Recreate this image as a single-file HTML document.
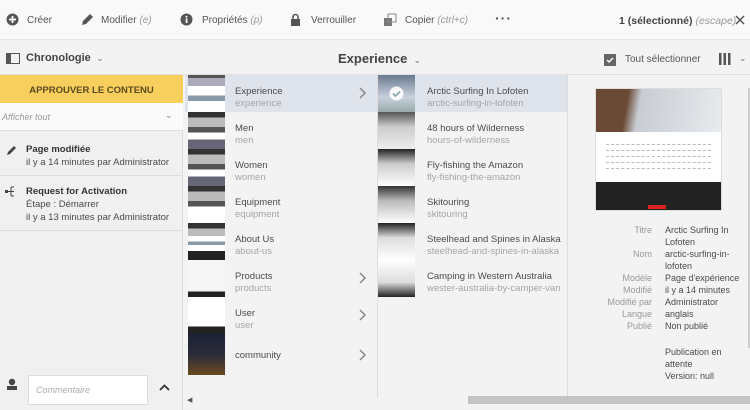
<!DOCTYPE html>
<html><head><meta charset="utf-8"><style>
*{margin:0;padding:0;box-sizing:border-box}
body{width:750px;height:410px;overflow:hidden;background:#f3f3f3;font-family:"Liberation Sans",sans-serif;color:#4b4b4b;position:relative;font-size:10px}
.a{position:absolute}
.tb{left:0;top:0;width:750px;height:40px;background:#f9f9f9;border-bottom:1px solid #e6e6e6}
.tb span{position:absolute;top:15px;font-size:10px;color:#555}
.tb i{color:#999}
.bar2{left:0;top:41px;width:750px;height:34px;background:#f3f3f3;border-bottom:1px solid #e0e0e0}
.left{left:0;top:75px;width:183px;height:335px;background:#f0f0f0;border-right:1px solid #ddd}
.col{top:75px;height:323px;background:#f3f3f3}
.row{position:absolute;left:0;height:37px;width:100%}
.row .t{position:absolute;font-size:9.5px;color:#4b4b4b;top:11px}
.row .s{position:absolute;font-size:9.5px;color:#a5a5a5;top:23px}
.th{position:absolute;left:3px;top:0;width:37px;height:37px}
.chev{position:absolute;right:10px;top:11px;width:8px;height:14px}
.mt{font-size:9px;color:#999;text-align:right;width:82px;position:absolute;left:570px}
.mv{font-size:9px;color:#4b4b4b;position:absolute;left:665px;width:80px;line-height:12px}
</style></head><body>
<div class="a tb">
<svg class="a" style="left:6px;top:13px" width="13" height="13"><circle cx="6.5" cy="6.5" r="6" fill="#555"/><path d="M6.5 3v7M3 6.5h7" stroke="#fff" stroke-width="1.8"/></svg>
<span style="left:27px">Créer</span>
<svg class="a" style="left:80px;top:13px" width="14" height="14"><path d="M2 12l1-4 7-7 3 3-7 7z" fill="#555"/></svg>
<span style="left:101px">Modifier <i>(e)</i></span>
<svg class="a" style="left:180px;top:13px" width="13" height="13"><circle cx="6.5" cy="6.5" r="6" fill="#555"/><rect x="5.7" y="5.5" width="1.7" height="4.5" fill="#fff"/><circle cx="6.5" cy="3.7" r="1" fill="#fff"/></svg>
<span style="left:202px">Propriétés <i>(p)</i></span>
<svg class="a" style="left:290px;top:13px" width="11" height="13"><path d="M3 6V4a2.5 2.5 0 015 0v2" stroke="#555" stroke-width="1.6" fill="none"/><rect x="1" y="6" width="9" height="7" fill="#555"/></svg>
<span style="left:311px">Verrouiller</span>
<svg class="a" style="left:384px;top:13px" width="13" height="13"><rect x="0" y="5" width="8" height="8" fill="#777"/><rect x="4" y="1" width="8" height="8" fill="none" stroke="#888"/></svg>
<span style="left:405px">Copier <i>(ctrl+c)</i></span>
<span style="left:495px;top:10px;font-weight:bold;font-size:14px;letter-spacing:1px">···</span>
<span style="left:619px;font-size:10.5px;color:#444;font-weight:bold">1 (sélectionné) <i style="font-weight:normal">(escape)</i></span>
<svg class="a" style="left:735px;top:15px" width="10" height="10"><path d="M1 1l8 8M9 1l-8 8" stroke="#555" stroke-width="1.5"/></svg>
</div>
<div class="a bar2">
<svg class="a" style="left:6px;top:12px" width="14" height="11"><rect x="0.5" y="0.5" width="13" height="10" fill="none" stroke="#555"/><rect x="1" y="1" width="4" height="9" fill="#555"/></svg>
<span class="a" style="left:26px;top:11px;font-weight:bold;font-size:11px;color:#444">Chronologie <span style="font-weight:normal;font-size:9px;color:#777">&nbsp;⌄</span></span>
<span class="a" style="left:338px;top:10px;font-weight:bold;font-size:13px;color:#444">Experience <span style="font-weight:normal;font-size:9px;color:#777">&nbsp;⌄</span></span>
<svg class="a" style="left:604px;top:13px" width="12" height="12"><rect x="0" y="0" width="12" height="12" fill="#666"/><path d="M3 6l2 2 4-4" stroke="#fff" stroke-width="1.5" fill="none"/></svg>
<span class="a" style="left:625px;top:13px;font-size:10px;color:#555">Tout sélectionner</span>
<svg class="a" style="left:719px;top:12px" width="12" height="12"><rect x="0" y="0" width="2.5" height="12" fill="#555"/><rect x="4.5" y="0" width="2.5" height="12" fill="#555"/><rect x="9" y="0" width="2.5" height="12" fill="#555"/></svg>
<span class="a" style="left:739px;top:12px;font-size:9px;color:#777">⌄</span>
</div>
<div class="a left">
<div class="a" style="left:0;top:0;width:183px;height:28px;background:#f8cf5d;text-align:center;font-weight:bold;font-size:9.5px;color:#5a4a20;padding-top:10px">APPROUVER LE CONTENU</div>
<div class="a" style="left:0;top:28px;width:183px;height:28px;background:#fafafa;border-bottom:1px solid #ddd"><span class="a" style="left:2px;top:9px;font-style:italic;color:#999;font-size:9px">Afficher tout</span><span class="a" style="left:165px;top:7px;color:#888;font-size:9px">⌄</span></div>
<svg class="a" style="left:6px;top:69px" width="12" height="12"><path d="M1 11l1-3 6-6 2 2-6 6z" fill="#444"/></svg>
<span class="a" style="left:26px;top:69px;font-weight:bold;font-size:9.5px;color:#333">Page modifiée</span>
<span class="a" style="left:26px;top:82px;font-size:9.5px">il y a 14 minutes par Administrator</span>
<div class="a" style="left:0;top:100px;width:183px;border-top:1px solid #ddd"></div>
<svg class="a" style="left:5px;top:111px" width="14" height="12"><rect x="0" y="4" width="3" height="3" fill="#444"/><path d="M3 5.5h3M6 1v9M6 1h3M6 5.5h3M6 10h3" stroke="#444" fill="none"/></svg>
<span class="a" style="left:26px;top:111px;font-weight:bold;font-size:9.5px;color:#333">Request for Activation</span>
<span class="a" style="left:26px;top:124px;font-size:9.5px">Étape : Démarrer</span>
<span class="a" style="left:26px;top:137px;font-size:9.5px">il y a 13 minutes par Administrator</span>
<div class="a" style="left:0;top:155px;width:183px;border-top:1px solid #ddd"></div>
<svg class="a" style="left:6px;top:303px" width="12" height="13"><circle cx="6" cy="4" r="3.2" fill="#444"/><rect x="1" y="8" width="10" height="4" fill="#444"/></svg>
<div class="a" style="left:28px;top:300px;width:120px;height:30px;background:#fff;border:1px solid #ddd"><span class="a" style="left:7px;top:9px;font-style:italic;color:#aaa;font-size:9px">Commentaire</span></div>
<svg class="a" style="left:159px;top:309px" width="11" height="7"><path d="M1 6l4.5-4.5L10 6" stroke="#333" stroke-width="1.8" fill="none"/></svg>
</div>
<div class="a col" style="left:185px;width:192px">
<div class="row" style="top:0;background:#dfe4ec"><div class="th" style="background:linear-gradient(#555 0 8%,#aab 8% 30%,#fff 30% 55%,#8899aa 55% 70%,#fff 70%)"></div><span class="t" style="left:50px">Experience</span><span class="s" style="left:50px">experience</span><svg class="chev"><path d="M1 2l5 5-5 5" stroke="#888" stroke-width="1.5" fill="none"/></svg></div>
<div class="row" style="top:37px"><div class="th" style="background:linear-gradient(#333 0 15%,#bbb 15% 40%,#555 40% 55%,#fff 55% 75%,#667 75%)"></div><span class="t" style="left:50px">Men</span><span class="s" style="left:50px">men</span></div>
<div class="row" style="top:74px"><div class="th" style="background:linear-gradient(#333 0 15%,#bbb 15% 40%,#555 40% 55%,#fff 55% 75%,#667 75%)"></div><span class="t" style="left:50px">Women</span><span class="s" style="left:50px">women</span></div>
<div class="row" style="top:111px"><div class="th" style="background:linear-gradient(#333 0 15%,#bbb 15% 40%,#555 40% 55%,#fff 55%)"></div><span class="t" style="left:50px">Equipment</span><span class="s" style="left:50px">equipment</span></div>
<div class="row" style="top:148px"><div class="th" style="background:linear-gradient(#333 0 15%,#bbb 15% 35%,#fff 35% 50%,#8899aa 50% 60%,#fff 60% 75%,#222 75%)"></div><span class="t" style="left:50px">About Us</span><span class="s" style="left:50px">about-us</span></div>
<div class="row" style="top:185px"><div class="th" style="background:linear-gradient(#f6f6f6 0 85%,#222 85%)"></div><span class="t" style="left:50px">Products</span><span class="s" style="left:50px">products</span><svg class="chev"><path d="M1 2l5 5-5 5" stroke="#888" stroke-width="1.5" fill="none"/></svg></div>
<div class="row" style="top:222px"><div class="th" style="background:linear-gradient(#fff 0 80%,#222 80%)"></div><span class="t" style="left:50px">User</span><span class="s" style="left:50px">user</span><svg class="chev"><path d="M1 2l5 5-5 5" stroke="#888" stroke-width="1.5" fill="none"/></svg></div>
<div class="row" style="top:259px;height:41px"><div class="th" style="height:41px;background:linear-gradient(#1c2235,#2a2a3a 50%,#6a4a20)"></div><span class="t" style="left:50px;top:16px">community</span><svg class="chev" style="top:14px"><path d="M1 2l5 5-5 5" stroke="#888" stroke-width="1.5" fill="none"/></svg></div>
</div>
<div class="a" style="left:377px;top:75px;width:1px;height:323px;background:#ddd"></div>
<div class="a col" style="left:378px;width:189px">
<div class="row" style="top:0;background:#dfe4ec"><div class="th" style="left:0;background:linear-gradient(#6a7a90,#c8d0dc 60%,#9aa)"><svg class="a" style="left:11px;top:11px" width="15" height="15"><circle cx="7.5" cy="7.5" r="7" fill="#fff" opacity=".9"/><path d="M4 7.5l2.5 2.5 4.5-4.5" stroke="#8aa" stroke-width="1.8" fill="none"/></svg></div><span class="t" style="left:49px">Arctic Surfing In Lofoten</span><span class="s" style="left:49px">arctic-surfing-in-lofoten</span></div>
<div class="row" style="top:37px"><div class="th" style="left:0;background:linear-gradient(#555,#ccc 40%,#eee)"></div><span class="t" style="left:49px">48 hours of Wilderness</span><span class="s" style="left:49px">hours-of-wilderness</span></div>
<div class="row" style="top:74px"><div class="th" style="left:0;background:linear-gradient(#222,#ccc 40%,#fff)"></div><span class="t" style="left:49px">Fly-fishing the Amazon</span><span class="s" style="left:49px">fly-fishing-the-amazon</span></div>
<div class="row" style="top:111px"><div class="th" style="left:0;background:linear-gradient(#333,#bbb 40%,#fff)"></div><span class="t" style="left:49px">Skitouring</span><span class="s" style="left:49px">skitouring</span></div>
<div class="row" style="top:148px"><div class="th" style="left:0;background:linear-gradient(#222,#ddd 40%,#fff)"></div><span class="t" style="left:49px">Steelhead and Spines in Alaska</span><span class="s" style="left:49px">steelhead-and-spines-in-alaska</span></div>
<div class="row" style="top:185px"><div class="th" style="left:0;background:linear-gradient(#fff,#ddd 60%,#222)"></div><span class="t" style="left:49px">Camping in Western Australia</span><span class="s" style="left:49px">wester-australia-by-camper-van</span></div>
</div>
<div class="a" style="left:567px;top:75px;width:1px;height:323px;background:#ddd"></div>
<div class="a" style="left:595px;top:88px;width:127px;height:123px;background:#fff;border:1px solid #ddd">
<div style="height:43px;background:linear-gradient(100deg,#6b4a35 0 25%,#c8cdd3 35%,#e8ebee)"></div>
<div style="height:1px;margin:12px 10px 0;border-top:1px dashed #bbb"></div>
<div style="height:1px;margin:5px 10px 0;border-top:1px dashed #bbb"></div>
<div style="height:1px;margin:5px 10px 0;border-top:1px dashed #bbb"></div>
<div style="height:1px;margin:5px 10px 0;border-top:1px dashed #bbb"></div>
<div style="height:1px;margin:5px 10px 0;border-top:1px dashed #bbb"></div>
<div class="a" style="left:0;bottom:0;width:125px;height:28px;background:#222"><div class="a" style="left:52px;bottom:1px;width:18px;height:4px;background:#d22"></div></div>
</div>
<div class="mt" style="top:225px">Titre</div><div class="mv" style="top:224px">Arctic Surfing In<br>Lofoten</div>
<div class="mt" style="top:249px">Nom</div><div class="mv" style="top:248px">arctic-surfing-in-<br>lofoten</div>
<div class="mt" style="top:273px">Modèle</div><div class="mv" style="top:272px">Page d'expérience</div>
<div class="mt" style="top:285px">Modifié</div><div class="mv" style="top:284px">il y a 14 minutes</div>
<div class="mt" style="top:297px">Modifié par</div><div class="mv" style="top:296px">Administrator</div>
<div class="mt" style="top:309px">Langue</div><div class="mv" style="top:308px">anglais</div>
<div class="mt" style="top:321px">Publié</div><div class="mv" style="top:320px">Non publié</div>
<div class="mv" style="top:346px">Publication en<br>attente<br>Version: null</div>
<div class="a" style="left:748px;top:88px;width:2px;height:260px;background:#ccc"></div>
<div class="a" style="left:185px;top:398px;width:565px;height:12px;background:#f3f3f3"></div>
<div class="a" style="left:468px;top:396px;width:282px;height:8px;background:#c4c4c4"></div>
<span class="a" style="left:187px;top:396px;font-size:7px;color:#555">◀</span>
</body></html>
